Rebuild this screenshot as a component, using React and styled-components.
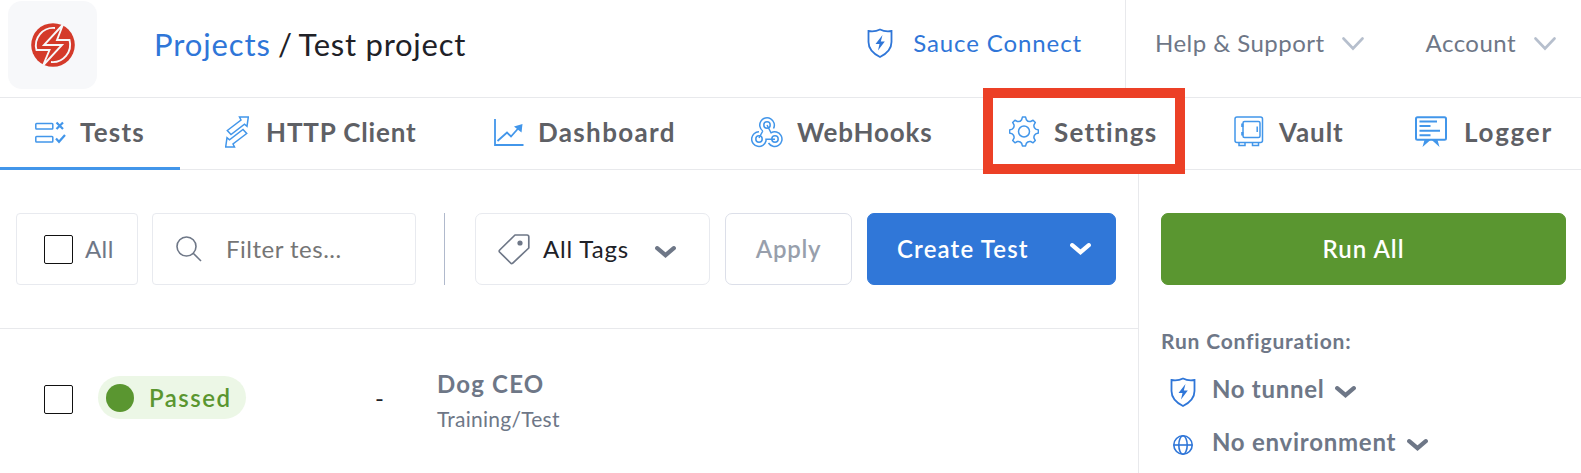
import React from "react";
import styled, { createGlobalStyle } from "styled-components";

const Global = createGlobalStyle`
  * { box-sizing: border-box; }
  body { margin: 0; background: #fff; font-family: Lato, "Open Sans", sans-serif; overflow: hidden; }
  svg { display: block; flex: none; fill: none; }
`;

const Page = styled.div`
  width: 1581px;
  height: 473px;
  display: flex;
  flex-direction: column;
`;

const Label = styled.span`
  font-size: ${(p) => p.$size || 24}px;
  font-weight: ${(p) => p.$weight || 400};
  letter-spacing: ${(p) => p.$track || 0}px;
  color: ${(p) => p.$color || "#6e7787"};
  line-height: 30px;
  white-space: pre;
`;

const Header = styled.header`
  height: 98px;
  border-bottom: 1px solid #e8e9ec;
  display: flex;
  flex: none;
`;

const LogoTile = styled.div`
  width: 89px;
  height: 88px;
  margin: 1px 0 0 8px;
  border-radius: 14px;
  background: #f7f8fa;
  display: flex;
  align-items: center;
  justify-content: center;
`;

const Crumbs = styled.div`
  margin: 29px 0 0 57px;
  flex: 1;
`;

const SauceLink = styled.div`
  display: flex;
  gap: 20px;
  padding: 28px 43px 0 0;
`;

const HeaderMenus = styled.div`
  width: 456px;
  border-left: 1px solid #e8e9ec;
  display: flex;
  justify-content: space-between;
  padding: 28px 25px 0 29px;
`;

const Menu = styled.div`
  display: flex;
  gap: 18px;
  svg { margin-top: 9px; }
`;

const Tabs = styled.nav`
  height: 72px;
  flex: none;
  border-bottom: 1px solid #e8e9ec;
  display: flex;
`;

const Tab = styled.div`
  position: relative;
  height: 72px;
  width: ${(p) => p.$width}px;
  padding: 0 0 2px ${(p) => p.$pad}px;
  display: flex;
  align-items: center;
  gap: ${(p) => p.$gap}px;
  border-bottom: 3px solid ${(p) => (p.$active ? "#4296ea" : "transparent")};
`;

const Highlight = styled.div`
  position: absolute;
  left: 0;
  top: -10px;
  width: 202px;
  height: 86px;
  border: 10px solid #ec4026;
`;

const Body = styled.main`
  flex: 1;
  display: flex;
`;

const TestsPane = styled.section`
  width: 1138px;
`;

const Toolbar = styled.div`
  height: 159px;
  border-bottom: 1px solid #e8e9ec;
  padding: 43px 0 0 16px;
  display: flex;
`;

const Box = styled.div`
  width: ${(p) => p.$width}px;
  height: 72px;
  margin-right: ${(p) => p.$after || 0}px;
  padding: ${(p) => p.$padding || "0"};
  display: flex;
  align-items: center;
  gap: ${(p) => p.$gap || 0}px;
  justify-content: ${(p) => p.$justify || "flex-start"};
  border: 1px solid ${(p) => p.$line || "#e8eaef"};
  border-radius: ${(p) => p.$radius || 4}px;
  background: ${(p) => p.$fill || "#fff"};
`;

const TagPicker = styled(Box)`
  > svg:last-child { margin: 6px 0 0 auto; }
`;

const Check = styled.div`
  width: 29px;
  height: 29px;
  border: 1px solid #111;
  border-radius: 2px;
  background: #fff;
`;

const Divider = styled.div`
  width: 1px;
  height: 72px;
  margin: 0 30px 0 28px;
  background: #b0b9cc;
`;

const Row = styled.div`
  display: flex;
  padding: 47px 0 0 44px;
  ${Check} { margin: 9px 25px 0 0; }
`;

const Pill = styled.div`
  width: 148px;
  height: 43px;
  border-radius: 22px;
  background: #ecf7e6;
  display: flex;
  align-items: center;
  gap: 15px;
  padding-left: 8px;
`;

const Dot = styled.i`
  width: 28px;
  height: 28px;
  border-radius: 50%;
  background: #5a9630;
`;

const Dash = styled.div`
  width: 62px;
  margin: 7px 0 0 129px;
`;

const TestName = styled.div`
  display: flex;
  flex-direction: column;
  gap: 5px;
  margin-top: -7px;
`;

const RunPane = styled.aside`
  flex: 1;
  border-left: 1px solid #e8e9ec;
  padding: 43px 0 0 22px;
`;

const ConfigTitle = styled.div`
  margin: 41px 0 17px;
  height: 30px;
`;

const ConfigRow = styled.div`
  display: flex;
  align-items: center;
  height: 34px;
  margin-bottom: 19px;
  ${Label} { margin-bottom: 2px; }
  > svg:last-child { margin: 4px 0 0 11px; }
`;

const ConfigIcon = styled.div`
  width: 51px;
  padding: 3px 7px 0 0;
  display: flex;
  justify-content: center;
`;

const Logo = () => (
  <svg width="44" height="44" viewBox="0 0 44 44">
    <circle cx="22" cy="22" r="21.8" fill="#d43a2a" />
    <path
      d="M24 5A17.500 17.500 0 0 0 5.500 27H18.500L12 42.500 31 22H13L32 1.500 26 17H38.500A17.500 17.500 0 0 1 20 39"
      stroke="#f7f8fa"
      strokeWidth="1.900"
    />
  </svg>
);

const Shield = () => (
  <svg width="26" height="30" viewBox="0 0 26 30" stroke="#2f76d8" strokeWidth="1.800">
    <path d="M13 1.500Q8 4 1.500 3V14C1.500 21 6 25.500 13 29C20 25.500 24.500 21 24.500 14V3Q18 4 13 1.500Z" />
    <path d="M15.500 7 8.500 16H12.500L11 22.500 17.800 13.500H13.800Z" fill="#2f76d8" stroke="none" />
  </svg>
);

const ThinChevron = () => (
  <svg width="22" height="14" viewBox="0 0 22 14">
    <path d="M1.500 1.500 11 11.500 20.500 1.500" stroke="#b6bfcd" strokeWidth="2.600" strokeLinecap="round" />
  </svg>
);

const Chevron = ({ color = "#6e7787" }) => (
  <svg width="21" height="12" viewBox="0 0 21 12">
    <path d="M2.200 2.200 10.500 9.200 18.800 2.200" stroke={color} strokeWidth="4.200" strokeLinecap="round" />
  </svg>
);

const TabIcon = ({ width, height, children }) => (
  <svg width={width} height={height} viewBox={`0 0 ${width} ${height}`} stroke="#4296ea" strokeWidth="1.500">
    {children}
  </svg>
);

const TestsIcon = () => (
  <TabIcon width={31} height={24}>
    <rect x=".8" y="3.500" width="17" height="5.500" rx=".8" />
    <rect x=".8" y="16.500" width="17" height="5.500" rx=".8" />
    <path d="M21.500 2.500 28 9M28 2.500 21.500 9M21 18.500 24 21.800 30 15" strokeWidth="2.200" />
  </TabIcon>
);

const HttpIcon = () => (
  <TabIcon width={24} height={32}>
    <path d="M2.300 14.500 16 4 14.500 1H23.300L22 10.300 19.500 8.200 6 18.500Z" />
    <path d="M21.700 17.500 8 28 9.500 31H.7L2 21.700 4.500 23.800 18 13.500Z" />
  </TabIcon>
);

const DashIcon = () => (
  <TabIcon width={30} height={28}>
    <path d="M1 1V27H29.500" strokeWidth="1.800" />
    <path d="M3.500 23 13 14.500 17 18.500 25 9.500" strokeWidth="1.800" />
    <path d="M20 8.500 28.500 6 27.500 14.500Z" fill="#4296ea" stroke="none" />
  </TabIcon>
);

const HookIcon = () => (
  <TabIcon width={32} height={32}>
    <circle cx="16" cy="9" r="3.200" />
    <circle cx="8" cy="23" r="3.200" />
    <circle cx="24" cy="23" r="3.200" />
    <path d="M11.800 15A7.300 7.300 0 1 1 22.500 12.500M11.800 15 8 22M8 15.800A7.300 7.300 0 1 0 15 25V23.200H24M17.500 27A7.300 7.300 0 1 0 20 16.800L16 9" />
  </TabIcon>
);

const gear = (() => {
  const at = (angle, r) => `${(15 + r * Math.cos(angle)).toFixed(2)} ${(15.5 + r * Math.sin(angle)).toFixed(2)}`;
  let d = "";
  for (let i = 0; i < 8; i++) {
    const a = (i * Math.PI) / 4 - Math.PI / 2;
    d += `${i ? "L" : "M"}${at(a - 0.2, 12)}L${at(a - 0.11, 14.5)}L${at(a + 0.11, 14.5)}L${at(a + 0.2, 12)}`;
    d += `Q${at(a + Math.PI / 8, 10.2)} ${at(a + Math.PI / 4 - 0.2, 12)}`;
  }
  return `${d}Z`;
})();

const GearIcon = () => (
  <TabIcon width={30} height={31}>
    <path d={gear} strokeLinejoin="round" />
    <circle cx="15" cy="15.500" r="5.500" />
  </TabIcon>
);

const VaultIcon = () => (
  <TabIcon width={30} height={31}>
    <rect x="1" y="1" width="27.500" height="25.500" rx="2" />
    <rect x="9" y="5.500" width="17" height="16" rx="1.500" />
    <path d="M23.200 10.500V16M5 27V29.500H11V27M18.500 27V29.500H24.500V27" />
    <path d="M8.300 7.500V11M8.300 16V19.500" strokeWidth="2.200" />
  </TabIcon>
);

const LoggerIcon = () => (
  <TabIcon width={32} height={31}>
    <rect x="1" y="1.200" width="30" height="22.500" rx="1.500" strokeWidth="2" />
    <path d="M4.500 5.500H22M4.500 10H15.500M4.500 14.700H25M4.500 19.200H15.500" strokeWidth="1.900" />
    <path d="M9.500 24 7.500 31 15.500 24ZM22.500 24 24.500 31 16.800 24Z" fill="#4296ea" stroke="none" />
  </TabIcon>
);

const SearchIcon = () => (
  <svg width="26" height="26" viewBox="0 0 26 26" stroke="#6e7787" strokeWidth="1.600">
    <circle cx="10.500" cy="10.500" r="9.500" />
    <path d="M17.200 17.200 25 25" />
  </svg>
);

const TagIcon = () => (
  <svg width="32" height="31" viewBox="0 0 32 31" stroke="#6e7787" strokeWidth="1.700" strokeLinejoin="round">
    <path d="M17 1H29Q30.800 1 30.800 2.800V14L14.500 29.300Q13.500 30 12.600 29L1.500 18Q.8 17 1.700 16Z" />
    <circle cx="22" cy="9" r="2.600" fill="#6e7787" stroke="none" />
  </svg>
);

const GlobeIcon = () => (
  <svg width="20" height="20" viewBox="0 0 20 20" stroke="#2f76d8" strokeWidth="1.600">
    <circle cx="10" cy="10" r="9.200" />
    <ellipse cx="10" cy="10" rx="4.200" ry="9.200" />
    <path d="M.8 10H19.200" />
  </svg>
);

const tabs = [
  { name: "Tests", icon: TestsIcon, width: 180, pad: 35, gap: 14, track: 1.2, active: true },
  { name: "HTTP Client", icon: HttpIcon, width: 314, pad: 45, gap: 17, track: 0.85 },
  { name: "Dashboard", icon: DashIcon, width: 257, pad: 0, gap: 14, track: 1.35 },
  { name: "WebHooks", icon: HookIcon, width: 232, pad: 0, gap: 14, track: 0.85 },
  { name: "Settings", icon: GearIcon, width: 202, pad: 26, gap: 15, track: 1.2, marked: true },
  { name: "Vault", icon: VaultIcon, width: 180, pad: 49, gap: 15, track: 0.9 },
  { name: "Logger", icon: LoggerIcon, width: 166, pad: 50, gap: 17, track: 1.75 },
];

export default function App() {
  return (
    <Page>
      <Global />
      <Header>
        <LogoTile><Logo /></LogoTile>
        <Crumbs>
          <Label $size={31} $track={0.9} $color="#2f76d8">Projects</Label>
          <Label $size={31} $track={-0.8} $color="#202127"> / </Label>
          <Label $size={31} $track={0.75} $color="#202127">Test project</Label>
        </Crumbs>
        <SauceLink>
          <Shield />
          <Label $track={0.9} $color="#2f76d8">Sauce Connect</Label>
        </SauceLink>
        <HeaderMenus>
          <Menu><Label $track={0.45}>Help &amp; Support</Label><ThinChevron /></Menu>
          <Menu><Label $track={0.45}>Account</Label><ThinChevron /></Menu>
        </HeaderMenus>
      </Header>
      <Tabs>
        {tabs.map(({ name, icon: Icon, width, pad, gap, track, active, marked }) => (
          <Tab key={name} $width={width} $pad={pad} $gap={gap} $active={active}>
            <Icon />
            <Label $size={26} $weight={700} $track={track} $color="#5e6065">{name}</Label>
            {marked && <Highlight />}
          </Tab>
        ))}
      </Tabs>
      <Body>
        <TestsPane>
          <Toolbar>
            <Box $width={122} $after={14} $padding="0 0 0 27px" $gap={12}>
              <Check />
              <Label $track={0.4}>All</Label>
            </Box>
            <Box $width={264} $padding="0 0 0 23px" $gap={24}>
              <SearchIcon />
              <Label $track={0.5} $color="#757575">Filter tes...</Label>
            </Box>
            <Divider />
            <TagPicker $width={235} $after={15} $padding="0 33px 0 22px" $radius={7} $gap={13}>
              <TagIcon />
              <Label $track={0.85} $color="#202127">All Tags</Label>
              <Chevron />
            </TagPicker>
            <Box $width={127} $after={15} $radius={7} $line="#dcdfe9" $justify="center">
              <Label $weight={600} $track={0.7} $color="#989fac">Apply</Label>
            </Box>
            <Box $width={249} $radius={7} $line="#3077d8" $fill="#3077d8" $padding="0 24px 0 29px" $justify="space-between">
              <Label $weight={600} $track={1.15} $color="#fff">Create Test</Label>
              <Chevron color="#fff" />
            </Box>
          </Toolbar>
          <Row>
            <Check />
            <Pill>
              <Dot />
              <Label $weight={600} $track={1.5} $color="#5a9630">Passed</Label>
            </Pill>
            <Dash><Label $color="#202127">-</Label></Dash>
            <TestName>
              <Label $weight={700} $track={1.2}>Dog CEO</Label>
              <Label $size={21} $track={0.25}>Training/Test</Label>
            </TestName>
          </Row>
        </TestsPane>
        <RunPane>
          <Box $width={405} $radius={7} $line="#5a9630" $fill="#5a9630" $justify="center">
            <Label $weight={600} $track={1} $color="#fff">Run All</Label>
          </Box>
          <ConfigTitle><Label $size={21} $weight={700} $track={0.82}>Run Configuration:</Label></ConfigTitle>
          <ConfigRow>
            <ConfigIcon><Shield /></ConfigIcon>
            <Label $weight={700} $track={0.7}>No tunnel</Label>
            <Chevron />
          </ConfigRow>
          <ConfigRow>
            <ConfigIcon><GlobeIcon /></ConfigIcon>
            <Label $weight={700} $track={0.75}>No environment</Label>
            <Chevron />
          </ConfigRow>
        </RunPane>
      </Body>
    </Page>
  );
}
